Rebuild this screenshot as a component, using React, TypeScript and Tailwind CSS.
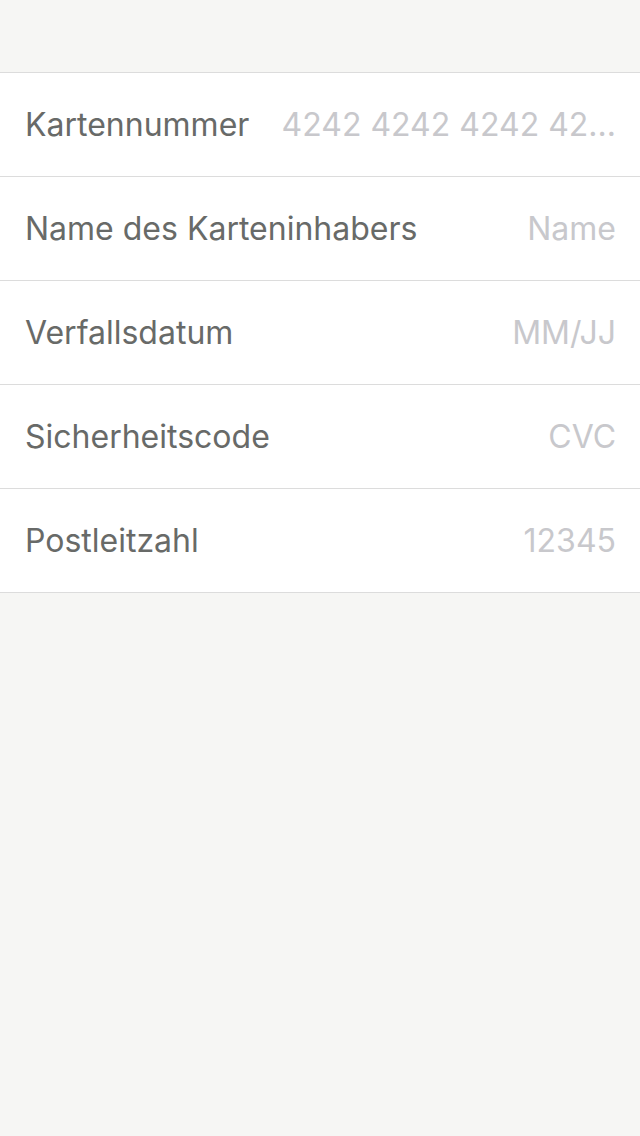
import React from "react";

const rows: { label: string; placeholder: string }[] = [
  { label: "Kartennummer", placeholder: "4242 4242 4242 42..." },
  { label: "Name des Karteninhabers", placeholder: "Name" },
  { label: "Verfallsdatum", placeholder: "MM/JJ" },
  { label: "Sicherheitscode", placeholder: "CVC" },
  { label: "Postleitzahl", placeholder: "12345" },
];

export default function App() {
  return (
    <div
      className="min-h-[1136px] w-[640px] bg-[#f6f6f4] pt-[72px]"
      style={{ fontFamily: "Inter, Roboto, 'Liberation Sans', sans-serif" }}
    >
      <div className="border-t border-[#dcdcdc] bg-white">
        {rows.map((r) => (
          <div
            key={r.label}
            className="flex h-[104px] items-center justify-between gap-[20px] border-b border-[#dcdcdc] pl-[25px] pr-[24px]"
          >
            <span className="shrink-0 whitespace-nowrap text-[32px] font-normal text-[#686a68]">
              {r.label}
            </span>
            <span className="whitespace-nowrap text-right text-[32px] font-normal text-[#c8c8cc]">
              {r.placeholder}
            </span>
          </div>
        ))}
      </div>
    </div>
  );
}
